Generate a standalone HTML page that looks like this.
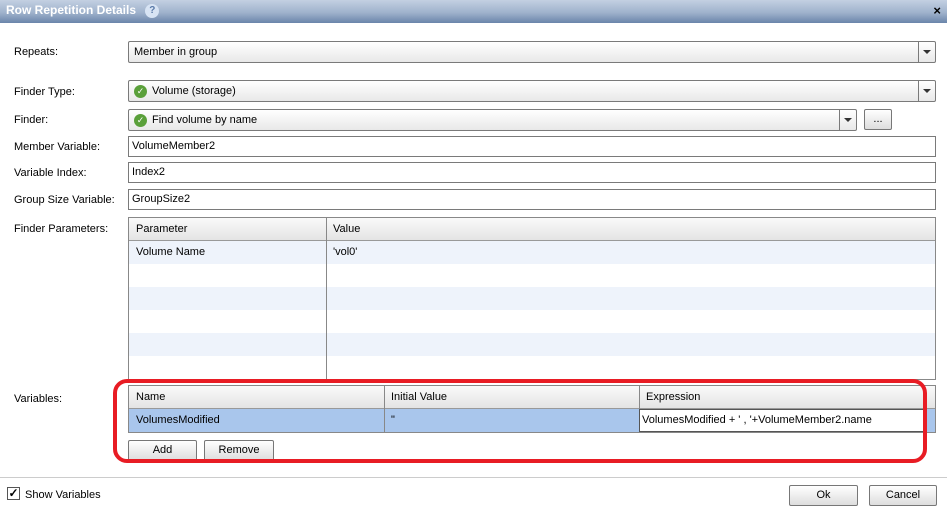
<!DOCTYPE html>
<html><head><style>
*{box-sizing:border-box;margin:0;padding:0}
body{width:947px;height:512px;background:#fff;font-family:"Liberation Sans",sans-serif;font-size:11px;color:#000;position:relative;overflow:hidden}
.a{position:absolute}
.title{left:0;top:0;width:947px;height:23px;background:linear-gradient(#c3d0e2,#9fb2cc 55%,#6b85aa);color:#fff;font-weight:bold;font-size:12px;line-height:21px;padding-left:6px}
.lbl{left:14px;font-size:11px}
.combo{border:1px solid #7a7a7a;border-radius:2px;background:linear-gradient(#fff,#e8e8e8);height:22px;padding-left:5px;display:flex;align-items:center}
.arr{position:absolute;right:0;top:0;width:17px;height:20px;border-left:1px solid #7a7a7a}
.arr:after{content:"";position:absolute;left:4px;top:8px;border-left:4px solid transparent;border-right:4px solid transparent;border-top:4px solid #333}
.inp{border:1px solid #7a7a7a;height:21px;line-height:19px;padding-left:3px;background:#fff}
.btn{border:1px solid #777;border-radius:2px;background:linear-gradient(#fff,#ddd);height:21px;line-height:19px;text-align:center}
.hdr{background:linear-gradient(#fafafa,#e4e4e4);border-bottom:1px solid #999}
.ic{display:inline-block;width:13px;height:13px;border-radius:50%;background:#5aa03a;margin-right:5px;color:#fff;font-size:9px;line-height:13px;text-align:center;flex:none}
</style></head><body>
<div class="a title">Row Repetition Details <span style="display:inline-block;width:14px;height:14px;border-radius:50%;background:#d8e4f4;color:#5a7aa8;font-size:10px;line-height:14px;text-align:center;margin-left:6px;vertical-align:1px">?</span></div>
<div class="a" style="right:6px;top:3px;color:#000;font-weight:bold;font-size:13px">×</div>

<div class="a lbl" style="top:46px">Repeats:</div>
<div class="a combo" style="left:128px;top:41px;width:808px">Member in group<div class="arr"></div></div>
<div class="a lbl" style="top:86px">Finder Type:</div>
<div class="a combo" style="left:128px;top:80px;width:808px"><span class="ic">✓</span>Volume (storage)<div class="arr"></div></div>
<div class="a lbl" style="top:114px">Finder:</div>
<div class="a combo" style="left:128px;top:109px;width:729px"><span class="ic">✓</span>Find volume by name<div class="arr"></div></div>
<div class="a btn" style="left:864px;top:109px;width:28px">...</div>
<div class="a lbl" style="top:141px">Member Variable:</div>
<div class="a inp" style="left:128px;top:136px;width:808px">VolumeMember2</div>
<div class="a lbl" style="top:167px">Variable Index:</div>
<div class="a inp" style="left:128px;top:162px;width:808px">Index2</div>
<div class="a lbl" style="top:194px">Group Size Variable:</div>
<div class="a inp" style="left:128px;top:189px;width:808px">GroupSize2</div>
<div class="a lbl" style="top:223px">Finder Parameters:</div>
<div class="a" style="left:128px;top:217px;width:808px;height:163px;border:1px solid #888;overflow:hidden">
 <div class="hdr" style="height:23px;line-height:22px;position:relative"><span class="a" style="left:7px">Parameter</span><span class="a" style="left:204px">Value</span></div>
 <div style="height:23px;background:#eef3fb;line-height:23px;position:relative"><span class="a" style="left:7px">Volume Name</span><span class="a" style="left:204px">'vol0'</span></div>
 <div style="height:23px"></div><div style="height:23px;background:#eef3fb"></div><div style="height:23px"></div><div style="height:23px;background:#eef3fb"></div>
 <div class="a" style="left:197px;top:0;width:1px;height:163px;background:#888"></div>
</div>
<div class="a lbl" style="top:393px">Variables:</div>
<div class="a" style="left:128px;top:385px;width:808px;height:48px;border:1px solid #888;overflow:hidden">
 <div class="hdr" style="height:23px;line-height:22px;position:relative"><span class="a" style="left:7px">Name</span><span class="a" style="left:262px">Initial Value</span><span class="a" style="left:517px">Expression</span></div>
 <div style="height:23px;background:#a9c6ec;position:relative;line-height:23px"><span class="a" style="left:7px">VolumesModified</span><span class="a" style="left:262px">"</span>
  <div class="a" style="left:510px;top:0;width:287px;height:23px;background:#fff;border:1px solid #555;padding-left:2px;line-height:21px">VolumesModified + ' , '+VolumeMember2.name</div></div>
 <div class="a" style="left:255px;top:0;width:1px;height:48px;background:#888"></div>
 <div class="a" style="left:510px;top:0;width:1px;height:23px;background:#888"></div>
</div>
<div class="a btn" style="left:128px;top:440px;width:69px">Add</div>
<div class="a btn" style="left:204px;top:440px;width:70px">Remove</div>
<div class="a" style="left:113px;top:379px;width:814px;height:84px;border:4px solid #e81c24;border-radius:14px"></div>
<div class="a" style="left:0;top:477px;width:947px;height:1px;background:#ccc"></div>
<div class="a" style="left:7px;top:487px;width:13px;height:13px;border:1px solid #555;background:#fff;font-size:12px;line-height:11px;text-align:center;font-weight:bold">✓</div>
<div class="a" style="left:25px;top:489px">Show Variables</div>
<div class="a btn" style="left:789px;top:485px;width:69px">Ok</div>
<div class="a btn" style="left:869px;top:485px;width:68px">Cancel</div>
</body></html>
